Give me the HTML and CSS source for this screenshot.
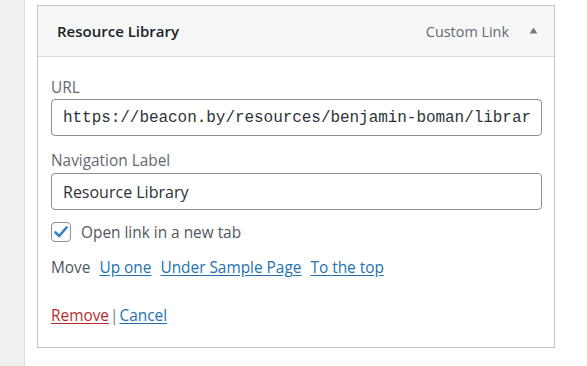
FILE: index.html
```html
<!DOCTYPE html>
<html>
<head>
<meta charset="utf-8">
<link rel="stylesheet" href="styles.css">
</head>
<body>
<div class="sidebar"></div>
<div class="main">
  <div class="panel">
    <div class="panel-head">
      <span class="item-title">Resource Library</span>
      <span class="item-controls">
        <span class="item-type">Custom Link</span>
        <svg class="toggle" width="9" height="7" viewBox="0 0 9 7"><path d="M0.5 6.5 L4.5 0.5 L8.5 6.5 Z" fill="#787c82"/></svg>
      </span>
    </div>
    <div class="panel-body">
      <label class="field-label">URL</label>
      <div class="input mono"><span>https://beacon.by/resources/benjamin-boman/library</span></div>
      <label class="field-label second">Navigation Label</label>
      <div class="input"><span>Resource Library</span></div>
      <div class="check-row">
        <span class="checkbox">
          <svg width="14" height="12" viewBox="0 0 14 12"><path d="M1.5 6.5 L5.2 10 L12.5 1.5" fill="none" stroke="#3582c4" stroke-width="2.6" stroke-linecap="round" stroke-linejoin="round"/></svg>
        </span>
        <span class="check-label">Open link in a new tab</span>
      </div>
      <div class="move-row">
        <span class="move-label">Move</span>
        <a class="link">Up one</a>
        <a class="link">Under Sample Page</a>
        <a class="link">To the top</a>
      </div>
      <div class="actions">
        <a class="link remove">Remove</a><span class="sep">|</span><a class="link">Cancel</a>
      </div>
    </div>
  </div>
</div>
</body>
</html>
```

FILE: styles.css
```css
html, body {
  margin: 0;
  padding: 0;
  height: 100%;
  background: #fff;
}
body {
  display: flex;
  font-family: "Open Sans", "Noto Sans", sans-serif;
  font-size: 15.4px;
  color: #50575e;
  overflow: hidden;
}
.sidebar {
  width: 24px;
  flex: none;
  height: 366px;
  background: #f0f0f1;
  border-right: 1px solid #dcdcde;
}
.main {
  padding: 5px 32px 0 12px;
  flex: 1;
  min-width: 0;
}
.panel {
  border: 1px solid #c3c4c7;
  background: #fff;
}
.panel-head {
  height: 50px;
  background: #f6f7f7;
  border-bottom: 1px solid #dcdcde;
  display: flex;
  align-items: center;
  justify-content: space-between;
  padding: 0 16px 0 19px;
}
.item-title {
  font-weight: 600;
  color: #1d2327;
  font-size: 15px;
}
.item-controls {
  display: flex;
  align-items: center;
  gap: 20px;
}
.item-type {
  color: #646970;
  font-size: 14.4px;
}
.toggle {
  display: block;
  margin-top: -2px;
}
.panel-body {
  padding: 21px 12px 0 13px;
  height: 290px;
  box-sizing: border-box;
}
.field-label {
  display: block;
  line-height: 20px;
  color: #646970;
  margin-bottom: 1px;
}
.field-label.second {
  margin-top: 15px;
  margin-bottom: 2px;
}
.input {
  height: 37px;
  box-sizing: border-box;
  border: 1px solid #8c8f94;
  border-radius: 4px;
  padding: 0 11px;
  display: flex;
  align-items: center;
  white-space: nowrap;
  color: #2c3338;
  font-size: 16px;
}
.input span {
  display: block;
  flex: 1;
  min-width: 0;
  overflow: hidden;
}
.input.mono {
  font-family: "Liberation Mono", "DejaVu Sans Mono", monospace;
  font-size: 16px;
  letter-spacing: -0.05px;
}
.check-row {
  margin-top: 12px;
  display: flex;
  align-items: center;
  gap: 10px;
  height: 20px;
}
.checkbox {
  width: 20px;
  height: 20px;
  box-sizing: border-box;
  border: 1px solid #8c8f94;
  border-radius: 4px;
  display: flex;
  align-items: center;
  justify-content: center;
}
.checkbox svg {
  display: block;
}
.check-label {
  color: #50575e;
}
.move-row {
  margin-top: 16px;
  display: flex;
  gap: 9px;
  line-height: 20px;
}
.move-label {
  color: #50575e;
}
.link {
  color: #2271b1;
  text-decoration: underline;
  text-underline-offset: 2px;
}
.remove {
  color: #b32d2e;
}
.actions {
  margin-top: 28px;
  line-height: 20px;
}
.sep {
  color: #787c82;
  margin: 0 1px;
}
```
